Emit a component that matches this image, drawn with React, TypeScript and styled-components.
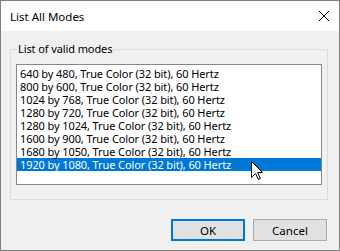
import React from 'react';
import styled, { createGlobalStyle } from 'styled-components';

const modes = [
  '640 by 480, True Color (32 bit), 60 Hertz',
  '800 by 600, True Color (32 bit), 60 Hertz',
  '1024 by 768, True Color (32 bit), 60 Hertz',
  '1280 by 720, True Color (32 bit), 60 Hertz',
  '1280 by 1024, True Color (32 bit), 60 Hertz',
  '1600 by 900, True Color (32 bit), 60 Hertz',
  '1680 by 1050, True Color (32 bit), 60 Hertz',
  '1920 by 1080, True Color (32 bit), 60 Hertz',
];

const GlobalStyle = createGlobalStyle`
  html, body {
    margin: 0;
    padding: 0;
    background: #ffffff;
  }
  body {
    font-family: "Noto Sans", "Open Sans", "Liberation Sans", sans-serif;
    font-size: 11px;
    color: #000000;
  }
`;

const Window = styled.div`
  position: relative;
  width: 340px;
  height: 251px;
  box-sizing: border-box;
  border: 1px solid #7f7f7f;
  display: flex;
  flex-direction: column;
  overflow: hidden;
`;

const TitleBar = styled.div`
  height: 30px;
  background: #ffffff;
  display: flex;
  align-items: center;
  padding-left: 9px;
`;

const Title = styled.span`
  flex: 1;
  font-size: 11.5px;
`;

const CloseButton = styled.div`
  width: 30px;
  height: 30px;
  display: flex;
  align-items: center;
  justify-content: center;
`;

const Body = styled.div`
  flex: 1;
  background: #f0f0f0;
  display: flex;
  flex-direction: column;
  padding: 10px 11px 9px 9px;
`;

const Group = styled.fieldset`
  flex: 1;
  margin: 0;
  border: 1px solid #dcdcdc;
  padding: 7px 5px 14px 5px;
  min-width: 0;
`;

const Legend = styled.legend`
  margin-left: 1px;
  padding: 0 1px;
  line-height: 16px;
  letter-spacing: -0.1px;
`;

const ListBox = styled.div`
  height: 121px;
  box-sizing: border-box;
  background: #ffffff;
  border: 1px solid #828790;
  padding-top: 2px;
`;

const Row = styled.div<{ $selected?: boolean }>`
  height: 13px;
  line-height: 13px;
  padding-left: 3px;
  white-space: nowrap;
  letter-spacing: -0.1px;
  background: ${(p) => (p.$selected ? '#0078d7' : 'transparent')};
  color: ${(p) => (p.$selected ? '#ffffff' : '#000000')};
`;

const ButtonRow = styled.div`
  display: flex;
  justify-content: flex-end;
  gap: 8px;
  margin-top: 19px;
  padding-right: 1px;
`;

const Button = styled.div<{ $focused?: boolean }>`
  width: 74px;
  height: 22px;
  box-sizing: border-box;
  background: #e1e1e1;
  border: ${(p) => (p.$focused ? '2px solid #0078d7' : '1px solid #adadad')};
  display: flex;
  align-items: center;
  justify-content: center;
  font-size: 11.5px;
`;

const Cursor = styled.svg`
  position: absolute;
  left: 249px;
  top: 159px;
`;

const App: React.FC = () => (
  <>
    <GlobalStyle />
    <Window>
      <TitleBar>
        <Title>List All Modes</Title>
        <CloseButton>
          <svg width="10" height="10" viewBox="0 0 10 10">
            <path d="M0 0L10 10M10 0L0 10" stroke="#000" strokeWidth="1" />
          </svg>
        </CloseButton>
      </TitleBar>
      <Body>
        <Group>
          <Legend>List of valid modes</Legend>
          <ListBox>
            {modes.map((m, i) => (
              <Row key={m} $selected={i === modes.length - 1}>
                {m}
              </Row>
            ))}
          </ListBox>
        </Group>
        <ButtonRow>
          <Button $focused>OK</Button>
          <Button>Cancel</Button>
        </ButtonRow>
      </Body>
      <Cursor width="13" height="21" viewBox="0 0 13 21">
        <path
          d="M1.5 1.5 L1.5 17.5 L5.5 13.5 L8.5 19.5 L10.5 18.5 L7.5 12.5 L12.5 12.5 Z"
          fill="#ffffff"
          stroke="#000000"
          strokeWidth="1"
          strokeLinejoin="miter"
        />
      </Cursor>
    </Window>
  </>
);

export default App;
